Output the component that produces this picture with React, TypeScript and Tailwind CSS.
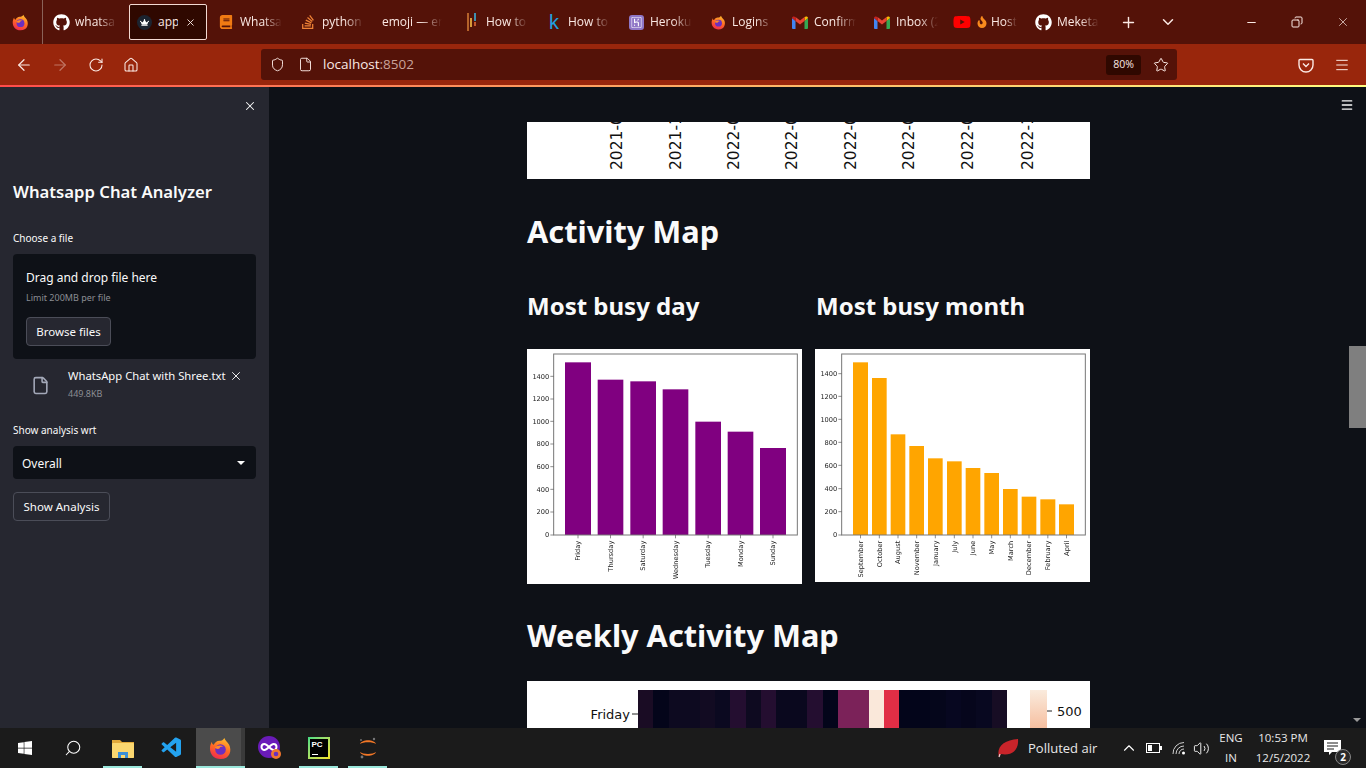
import React from "react";
import {
  ArrowLeft,
  ArrowRight,
  RotateCw,
  House,
  Shield,
  File,
  Star,
  Menu,
  Plus,
  ChevronDown,
  ChevronUp,
  Minus,
  X,
  Copy,
  Search,
  Volume2,
} from "lucide-react";
import {
  FaGithub,
  FaStackOverflow,
  FaWindows,
  FaYoutube,
  FaFire,
  FaCrown,
  FaBook,
} from "react-icons/fa";
import { SiHeroku } from "react-icons/si";
import { VscVscode } from "react-icons/vsc";

const sans = "font-['Noto_Sans',sans-serif]";
const ui = "font-['Open_Sans','Noto_Sans',sans-serif]";
const plot = "'DejaVu Sans', sans-serif";

/* ── Small drawn logos ── */
function FirefoxLogo({ size = 18 }: { size?: number }) {
  return (
    <svg width={size} height={size} viewBox="0 0 24 24">
      <defs>
        <linearGradient id="fx" x1="0.7" y1="0" x2="0.3" y2="1">
          <stop offset="0" stopColor="#ffbd2e" />
          <stop offset="0.5" stopColor="#ff6a24" />
          <stop offset="1" stopColor="#f0294f" />
        </linearGradient>
      </defs>
      <path d="M16 1c1 3 3 4 5 7 3 6 1 15-9 15C5 23 1 18 1 12c0-3 1-5 2-7 0 2 1 3 2 3 1-2 3-4 6-4 2 0 4-1 5-3z" fill="url(#fx)" />
      <circle cx="12" cy="13" r="5.5" fill="#6b2fc0" />
      <path d="M6 11c2-2 6-3 9-1-3 0-4 1-4 2-2 1-4 0-5-1z" fill="#ff8a2a" />
    </svg>
  );
}

function GmailLogo() {
  return (
    <svg width="16" height="13" viewBox="0 0 16 13">
      <path d="M0 2v10a1 1 0 0 0 1 1h2.500V5z" fill="#4285f4" />
      <path d="M16 2v10a1 1 0 0 1-1 1h-2.500V5z" fill="#34a853" />
      <path d="M12.500 1v4l3.500-3c0-1.500-2-2-3.500-1z" fill="#fbbc04" />
      <path d="M3.500 1v4L8 8.500 12.500 5V1L8 4.500z" fill="#ea4335" />
      <path d="M3.500 1v4L0 2c0-1.500 2-2 3.500-1z" fill="#c5221f" />
    </svg>
  );
}

function HowToLogo() {
  return (
    <svg width="11" height="18" viewBox="0 0 11 18">
      <rect x="0" y="0" width="2" height="18" fill="#b5622a" />
      <rect x="3" y="5" width="2" height="9" fill="#d69a3a" />
      <rect x="7" y="0" width="2" height="8" fill="#3f8fb0" />
      <rect x="7" y="9" width="2" height="4" fill="#c2572d" />
    </svg>
  );
}

/* ── Browser chrome ── */
function Tab({ icon, label }: { icon?: React.ReactNode; label: string }) {
  return (
    <div className={`flex h-[44px] w-[82px] shrink-0 items-center pl-[2px] ${ui}`}>
      <div className="flex w-[26px] shrink-0 items-center justify-center pl-[2px] pr-[4px]">{icon}</div>
      <span className="w-[42px] overflow-hidden whitespace-nowrap text-[12px] text-[#fbe9e4] [mask-image:linear-gradient(to_right,black_55%,transparent)]">
        {label}
      </span>
    </div>
  );
}

function BrowserTabs() {
  return (
    <div className="flex h-[44px] items-center bg-[#541208]">
      <div className="flex h-[44px] w-[42px] shrink-0 items-center justify-center pr-[2px]">
        <FirefoxLogo size={17} />
      </div>
      <div className="h-[44px] w-px shrink-0 bg-[#8a6258]" />
      <div className="w-[4px] shrink-0" />
      <Tab icon={<FaGithub size={17} className="text-white" />} label="whatsa" />
      <div className={`flex h-[36px] w-[78px] shrink-0 items-center rounded-[2px] border border-[#f3d9d2] bg-[#2f0800] pl-[7px] ${ui}`}>
        <div className="flex h-[15px] w-[15px] items-center justify-center rounded-full bg-[#1c2430]">
          <FaCrown size={9} className="text-white" />
        </div>
        <span className="ml-[6px] w-[20px] overflow-hidden whitespace-nowrap text-[12px] text-[#fbe9e4]">app</span>
        <X size={11} className="ml-[7px] text-[#fbe9e4]" />
      </div>
      <div className="w-[5px] shrink-0" />
      <Tab icon={<FaBook size={14} className="text-[#f07a13]" />} label="Whatsa" />
      <Tab icon={<FaStackOverflow size={16} className="text-[#ef8236]" />} label="python" />
      <div className={`flex h-[44px] w-[82px] shrink-0 items-center pl-[6px] ${ui}`}>
        <span className="w-[60px] overflow-hidden whitespace-nowrap text-[12px] text-[#fbe9e4] [mask-image:linear-gradient(to_right,black_65%,transparent)]">
          emoji — en
        </span>
      </div>
      <Tab icon={<HowToLogo />} label="How to" />
      <Tab icon={<span className="font-['Liberation_Sans',sans-serif] text-[20px] leading-none text-[#20a0e0]">k</span>} label="How to" />
      <Tab icon={<div className="flex h-[15px] w-[15px] items-center justify-center rounded-[3px] bg-[#8f76c6]"><SiHeroku size={11} className="text-white" /></div>} label="Heroku" />
      <Tab icon={<FirefoxLogo size={15} />} label="Logins" />
      <Tab icon={<GmailLogo />} label="Confirm" />
      <Tab icon={<GmailLogo />} label="Inbox (2" />
      <div className={`flex h-[44px] w-[79px] shrink-0 items-center pl-[3px] ${ui}`}>
        <FaYoutube size={18} className="shrink-0 text-[#ff0000]" />
        <FaFire size={12} className="ml-[5px] shrink-0 text-[#f98a1d]" />
        <span className="ml-[3px] w-[26px] overflow-hidden whitespace-nowrap text-[12px] text-[#fbe9e4] [mask-image:linear-gradient(to_right,black_55%,transparent)]">
          Host
        </span>
      </div>
      <Tab icon={<FaGithub size={17} className="text-white" />} label="Meketa" />
      <div className="flex w-[30px] shrink-0 justify-end pr-[4px]">
        <Plus size={17} className="text-[#fbe9e4]" />
      </div>
      <div className="flex w-[39px] shrink-0 justify-end pr-[3px]">
        <ChevronDown size={18} className="text-[#fbe9e4]" />
      </div>
      <div className="flex flex-1 items-center justify-end text-[#fbe9e4]">
        <div className="flex w-[46px] justify-center"><Minus size={13} /></div>
        <div className="flex w-[46px] justify-center"><Copy size={12} className="-scale-x-100" /></div>
        <div className="flex w-[46px] justify-center"><X size={14} strokeWidth={1.2} /></div>
      </div>
    </div>
  );
}

function BrowserToolbar() {
  return (
    <div className="flex h-[41px] items-center bg-[#99260c] text-[#fbe9e4]">
      <div className="flex w-[261px] shrink-0 items-center pl-[15px]">
        <ArrowLeft size={18} strokeWidth={1.6} />
        <ArrowRight size={18} strokeWidth={1.6} className="ml-[18px] opacity-40" />
        <RotateCw size={16} strokeWidth={1.6} className="ml-[19px]" />
        <House size={16} strokeWidth={1.6} className="ml-[19px]" />
      </div>
      <div className="flex h-[31px] w-[916px] shrink-0 items-center rounded-[3px] bg-[#541208] pl-[9px] pr-[8px]">
        <Shield size={15} strokeWidth={1.5} />
        <File size={15} strokeWidth={1.5} className="ml-[13px]" />
        <span className={`ml-[10px] text-[13.5px] ${ui}`}>
          localhost<span className="text-[#c9a39a]">:8502</span>
        </span>
        <div className="flex-1" />
        <span className={`flex h-[20px] w-[35px] items-center justify-center rounded-[3px] bg-[#2f0800] text-[10.5px] ${ui}`}>80%</span>
        <Star size={16} strokeWidth={1.5} className="ml-[12px]" />
      </div>
      <div className="flex flex-1 items-center justify-end pr-[16px]">
        <svg width="16" height="16" viewBox="0 0 16 16" fill="none" stroke="#fbe9e4" strokeWidth="1.4">
          <path d="M2 2.500h12a1 1 0 0 1 1 1V8a7 7 0 0 1-14 0V3.500a1 1 0 0 1 1-1z" />
          <path d="M5 6.500l3 3 3-3" />
        </svg>
        <Menu size={16} strokeWidth={1.5} className="ml-[20px]" />
      </div>
    </div>
  );
}

/* ── Streamlit sidebar ── */
function Sidebar() {
  return (
    <aside className={`flex w-[269px] shrink-0 flex-col bg-[#262730] px-[13px] text-[#fafafa] ${sans}`}>
      <div className="flex h-[38px] items-center justify-end">
        <X size={14} strokeWidth={1.8} className="mr-[-1px]" />
      </div>
      <h2 className="mt-[55px] text-[16.7px] font-semibold leading-[24px]">Whatsapp Chat Analyzer</h2>
      <label className="mt-[27px] text-[10px] leading-[14px]">Choose a file</label>
      <div className="mt-[9px] h-[105px] rounded-[4px] bg-[#0e1117] px-[13px] pt-[15px]">
        <p className="text-[12px] leading-[17px]">Drag and drop file here</p>
        <p className="mt-[5px] text-[9px] leading-[14px] text-[#8b8d93]">Limit 200MB per file</p>
        <button className="mt-[12px] h-[29px] w-[85px] rounded-[4px] border border-[#4b4d58] bg-[#262730] text-[11.5px]">Browse files</button>
      </div>
      <div className="mt-[9px] flex h-[42px]">
        <File size={19} strokeWidth={2} className="ml-[18px] mt-[8px] text-[#a3a8b8]" />
        <div className="ml-[18px]">
          <div className="flex items-center">
            <span className="w-[160px] whitespace-nowrap text-[11.25px] leading-[15px]">WhatsApp Chat with Shree.txt</span>
            <X size={14} strokeWidth={1.6} className="ml-[1px]" />
          </div>
          <p className="mt-[5px] text-[9px] leading-[12px] text-[#8b8d93]">449.8KB</p>
        </div>
      </div>
      <label className="mt-[13px] text-[10px] leading-[14px]">Show analysis wrt</label>
      <div className="mt-[9px] flex h-[33px] items-center justify-between rounded-[4px] bg-[#0e1117] pl-[9px] pr-[11px]">
        <span className="pt-[2px] text-[12px]">Overall</span>
        <div className="h-0 w-0 border-x-[4px] border-t-[4px] border-x-transparent border-t-[#fafafa]" />
      </div>
      <button className="mt-[13px] h-[29px] w-[97px] rounded-[4px] border border-[#4b4d58] text-[11.5px]">Show Analysis</button>
    </aside>
  );
}

/* ── Matplotlib pictures ── */
type Bar = { label: string; x: number; w: number; top: number };

const dayBars: Bar[] = [
  { label: "Friday", x: 135, w: 78, top: 52 },
  { label: "Thursday", x: 233, w: 77, top: 104 },
  { label: "Saturday", x: 331, w: 77, top: 109 },
  { label: "Wednesday", x: 428, w: 77, top: 133 },
  { label: "Tuesday", x: 526, w: 77, top: 230 },
  { label: "Monday", x: 623, w: 77, top: 260 },
  { label: "Sunday", x: 720, w: 78, top: 309 },
];
const dayTicks = [
  [1400, 94], [1200, 162], [1000, 229], [800, 297], [600, 365], [400, 433], [200, 501], [0, 570],
];

const monthBars: Bar[] = [
  { label: "September", x: 129, w: 45, top: 52 },
  { label: "October", x: 186, w: 44, top: 99 },
  { label: "August", x: 242, w: 44, top: 268 },
  { label: "November", x: 298, w: 44, top: 303 },
  { label: "January", x: 354, w: 44, top: 340 },
  { label: "July", x: 411, w: 44, top: 349 },
  { label: "June", x: 467, w: 44, top: 369 },
  { label: "May", x: 523, w: 44, top: 384 },
  { label: "March", x: 579, w: 44, top: 432 },
  { label: "December", x: 635, w: 44, top: 455 },
  { label: "February", x: 691, w: 45, top: 463 },
  { label: "April", x: 747, w: 45, top: 478 },
];
const monthTicks = [
  [1400, 86], [1200, 154], [1000, 223], [800, 292], [600, 361], [400, 431], [200, 500], [0, 570],
];

// coordinates are in 3x picture units, measured off the plot
function BarChart({ bars, ticks, color, left, right, originX, height }: {
  bars: Bar[];
  ticks: number[][];
  color: string;
  left: number;
  right: number;
  originX: number;
  height: number;
}) {
  return (
    <svg
      viewBox={`${originX} 12 825 ${height * 3}`}
      className="block w-[275px] bg-white blur-[0.35px]"
      style={{ height }}
      fontFamily={plot}
      fontSize="20"
      fill="#222"
    >
      {bars.map((b) => (
        <rect key={b.label} x={b.x} y={b.top} width={b.w} height={570 - b.top} fill={color} />
      ))}
      <rect x={left} y="27" width={right - left} height="543" fill="none" stroke="#777" strokeWidth="3" />
      {ticks.map(([v, y]) => (
        <g key={v}>
          <line x1={left - 10} x2={left} y1={y} y2={y} stroke="#555" strokeWidth="2" />
          <text x={left - 13} y={y + 7} textAnchor="end">{v}</text>
        </g>
      ))}
      {bars.map((b) => {
        const cx = b.x + b.w / 2;
        return (
          <g key={b.label}>
            <line x1={cx} x2={cx} y1="570" y2="580" stroke="#555" strokeWidth="2" />
            <text x={cx + 7} y="587" textAnchor="end" transform={`rotate(-90 ${cx + 7} 587)`}>{b.label}</text>
          </g>
        );
      })}
    </svg>
  );
}

const stripX = [89, 148, 206, 264, 323, 381, 440, 500];
const stripLabels = ["2021-0", "2021-1", "2022-0", "2022-0", "2022-0", "2022-0", "2022-0", "2022-1"];

function DateStrip() {
  return (
    <svg viewBox="0 0 563 57" className="block h-[57px] w-[563px] bg-white" fontFamily={plot} fontSize="15.5" fill="#111">
      {stripX.map((x, i) => (
        <text key={x} x={x + 6} y="48" transform={`rotate(-90 ${x + 6} 48)`}>{stripLabels[i]}</text>
      ))}
    </svg>
  );
}

const heatCells = [
  "#1a0c24", "#04051a", "#0d0a20", "#0d0a20", "#120b22", "#0b0920", "#240e30", "#0e0a20",
  "#240e30", "#0a081e", "#0a081e", "#240e30", "#03051a", "#7b2259", "#7b2259", "#fae8da",
  "#e12e45", "#03051a", "#03051a", "#05061b", "#070720", "#06061c", "#080820", "#170d24",
];

function Heatmap() {
  return (
    <svg viewBox="0 0 563 47" className="block h-[47px] w-[563px] bg-white" fontFamily={plot} fontSize="13" fill="#111">
      {heatCells.map((c, i) => (
        <rect key={i} x={111 + i * 15.375} y="9" width="15.6" height="38" fill={c} shapeRendering="crispEdges" />
      ))}
      <defs>
        <linearGradient id="cbar" x1="0" y1="0" x2="0" y2="1">
          <stop offset="0" stopColor="#faebdd" />
          <stop offset="1" stopColor="#f6bfa0" />
        </linearGradient>
      </defs>
      <rect x="503" y="9" width="17" height="38" fill="url(#cbar)" />
      <line x1="105" x2="111" y1="33" y2="33" stroke="#222" />
      <text x="103" y="38" textAnchor="end">Friday</text>
      <line x1="520" x2="525" y1="30" y2="30" stroke="#222" />
      <text x="530" y="35">500</text>
    </svg>
  );
}

function MainArea() {
  return (
    <main className={`relative flex-1 overflow-hidden bg-[#0e1117] pl-[258px] pt-[35px] text-[#fafafa] ${sans}`}>
      <DateStrip />
      <h1 className="mt-[31px] text-[30.75px] font-bold leading-[42px]">Activity Map</h1>
      <div className="mt-[37px] flex gap-[13px]">
        <div className="w-[275px]">
          <h2 className="text-[24px] font-bold leading-[34px]">Most busy day</h2>
          <div className="mt-[26px]">
            <BarChart bars={dayBars} ticks={dayTicks} color="#800080" left={101} right={832} originX={21} height={235} />
          </div>
        </div>
        <div className="w-[275px]">
          <h2 className="pl-px text-[24px] font-bold leading-[34px]">Most busy month</h2>
          <div className="mt-[26px]">
            <BarChart bars={monthBars} ticks={monthTicks} color="#ffa500" left={95} right={826} originX={15} height={233} />
          </div>
        </div>
      </div>
      <h1 className="mt-[30px] text-[30.75px] font-bold leading-[42px]">Weekly Activity Map</h1>
      <div className="mt-[25px]">
        <Heatmap />
      </div>
      {/* overlay bits: streamlit menu + page scrollbar */}
      <Menu size={14} strokeWidth={2.4} className="absolute right-[12px] top-[11px] text-[#fafafa]" />
      <div className="absolute right-0 top-[259px] h-[82px] w-[17px] bg-[#7f7f7f]" />
      <div className="absolute bottom-[6px] right-[5px] h-0 w-0 border-x-[4px] border-t-[4px] border-x-transparent border-t-[#9a9a9a]" />
    </main>
  );
}

/* ── Windows taskbar ── */
function TaskSlot({ children, active, open }: { children: React.ReactNode; active?: boolean; open?: boolean }) {
  return (
    <div className={`relative flex h-[40px] w-[49px] shrink-0 items-center justify-center ${active ? "bg-[#4b4b4b]" : ""}`}>
      {children}
      {active && <div className="absolute inset-y-0 right-0 w-[4px] bg-[#3a3a3a]" />}
      {open && <div className={`absolute bottom-0 h-[2px] bg-[#9be8dc] ${active ? "inset-x-0" : "inset-x-[5px]"}`} />}
    </div>
  );
}

function FolderLogo() {
  return (
    <svg width="22" height="19" viewBox="0 0 22 19">
      <path d="M0 1h8l2 2h12v15a1 1 0 0 1-1 1H1a1 1 0 0 1-1-1z" fill="#e2a93a" />
      <rect y="4" width="22" height="15" rx="1" fill="#fbd76f" />
      <path d="M6 19v-6h10v6h-3v-3H9v3z" fill="#3b8fd6" />
    </svg>
  );
}

function InfinityLogo() {
  return (
    <svg width="24" height="24" viewBox="0 0 24 24">
      <circle cx="11" cy="11" r="11" fill="#6a1bb8" />
      <path d="M6.500 8a3 3 0 1 0 0 6c2.500 0 6.500-6 9-6a3 3 0 1 1 0 6c-2.500 0-6.500-6-9-6z" fill="none" stroke="#fff" strokeWidth="2" />
      <circle cx="18" cy="18" r="5" fill="#f2762e" />
      <circle cx="18" cy="18" r="2.300" fill="#6a2fc0" />
    </svg>
  );
}

function PycharmLogo() {
  return (
    <div className="flex h-[22px] w-[22px] items-center justify-center bg-gradient-to-br from-[#3ddc84] to-[#f2e21b] p-[2px]">
      <div className="flex h-full w-full flex-col justify-between bg-black px-[2px] py-[1px] font-['Liberation_Sans',sans-serif] text-[8px] font-bold leading-[9px] text-white">
        PC
        <div className="mb-[1px] h-[1px] w-[6px] bg-white" />
      </div>
    </div>
  );
}

function JupyterLogo() {
  return (
    <svg width="18" height="24" viewBox="0 0 18 24">
      <path d="M1 8c2-5 14-5 16 0-3-2.500-13-2.500-16 0z" fill="#f37726" />
      <path d="M1 16c2 5 14 5 16 0-3 2.500-13 2.500-16 0z" fill="#f37726" />
      <circle cx="15" cy="3" r="1.200" fill="#767677" />
      <circle cx="3" cy="21" r="1.400" fill="#767677" />
      <circle cx="2" cy="4" r="0.900" fill="#767677" />
    </svg>
  );
}

function TrayBattery() {
  return (
    <svg width="16" height="10" viewBox="0 0 16 10" fill="none" className="ml-[8px] shrink-0">
      <rect x="0.500" y="0.500" width="13" height="9" stroke="#fff" />
      <rect x="2" y="2" width="4" height="6" fill="#fff" />
      <rect x="14" y="3" width="2" height="4" fill="#fff" />
    </svg>
  );
}

function TrayWifi() {
  return (
    <svg width="14" height="14" viewBox="0 0 14 14" fill="none" stroke="#cfcfcf" strokeWidth="1" className="ml-[10px] shrink-0">
      <path d="M1 13A11 11 0 0 1 12 1.500" />
      <path d="M4 13a8 8 0 0 1 8-8" />
      <path d="M7 13a5 5 0 0 1 5-5" />
      <circle cx="11.500" cy="12" r="1.500" fill="#fff" stroke="none" />
    </svg>
  );
}

function TrayNotes() {
  return (
    <svg width="17" height="16" viewBox="0 0 17 16" className="shrink-0">
      <path d="M0 0h17v12H8l-3 3v-3H0z" fill="#fff" />
      <path d="M3 3h11M3 6h11M3 9h7" stroke="#1b1b1b" />
    </svg>
  );
}

function Taskbar() {
  return (
    <footer className={`flex h-[40px] items-center bg-[#1b1b1b] text-white ${ui}`}>
      <TaskSlot><FaWindows size={16} /></TaskSlot>
      <TaskSlot><Search size={18} strokeWidth={1.4} className="-scale-x-100 -translate-x-[1px]" /></TaskSlot>
      <TaskSlot open><FolderLogo /></TaskSlot>
      <TaskSlot><VscVscode size={24} className="text-[#23a2ef]" /></TaskSlot>
      <TaskSlot active open><FirefoxLogo size={23} /></TaskSlot>
      <TaskSlot><InfinityLogo /></TaskSlot>
      <TaskSlot open><PycharmLogo /></TaskSlot>
      <TaskSlot open><JupyterLogo /></TaskSlot>
      <div className="flex-1" />
      <svg width="22" height="20" viewBox="0 0 22 20" className="shrink-0">
        <path d="M2 19C-1 9 7 2 21 1c1 11-6 17-17 15z" fill="#c8242a" />
        <path d="M2 19l1-3" stroke="#e8d0d0" strokeWidth="1.200" />
      </svg>
      <span className="ml-[9px] w-[93px] pt-[1px] text-[13px] text-[#e8e8e8]">Polluted air</span>
      <ChevronUp size={18} strokeWidth={1.5} className="-ml-[1px]" />
      <TrayBattery />
      <TrayWifi />
      <Volume2 size={17} strokeWidth={1.3} className="ml-[7px]" />
      <div className="ml-[4px] w-[34px] text-center text-[11.5px] leading-[20px] text-[#e8e8e8]">ENG<br />IN</div>
      <div className="w-[70px] text-center text-[11.5px] leading-[20px] text-[#e8e8e8]">10:53 PM<br />12/5/2022</div>
      <div className="relative ml-[6px] mr-[22px] flex h-[40px] w-[20px] items-center">
        <TrayNotes />
        <div className="absolute bottom-[3px] right-[-7px] flex h-[16px] w-[16px] items-center justify-center rounded-full border border-[#888] bg-[#2a2a2a] text-[10px] font-bold">2</div>
      </div>
    </footer>
  );
}

export default function App() {
  return (
    <div className="flex h-[768px] w-[1366px] flex-col overflow-hidden bg-black">
      <BrowserTabs />
      <BrowserToolbar />
      <div className="h-[2px] bg-gradient-to-r from-[#ff4b4b] to-[#fffd80]" />
      <div className="flex min-h-0 flex-1">
        <Sidebar />
        <MainArea />
      </div>
      <Taskbar />
    </div>
  );
}
